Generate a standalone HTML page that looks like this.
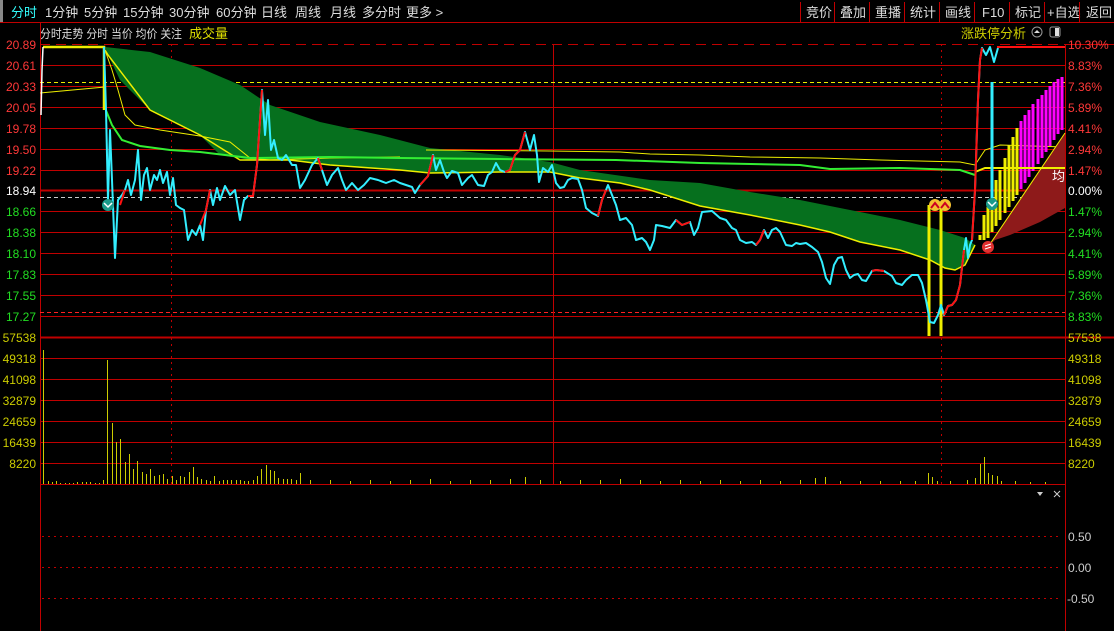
<!DOCTYPE html>
<html><head><meta charset="utf-8"><style>
body{margin:0;background:#000;width:1114px;height:631px;overflow:hidden;font-family:"Liberation Sans","Noto Sans CJK SC",sans-serif}
svg{display:block}
</style></head><body>
<svg width="1114" height="631" viewBox="0 0 1114 631" xmlns="http://www.w3.org/2000/svg" font-family="Liberation Sans, Noto Sans CJK SC, sans-serif">
<rect width="1114" height="631" fill="#000"/>
<!-- top bar -->
<rect x="0" y="0" width="3" height="22" fill="#888"/>
<line x1="0" y1="22.5" x2="1114" y2="22.5" stroke="#c00000"/>
<g font-size="13" fill="#ddd">
<text x="11" y="17" fill="#3ff">分时</text>
<text x="45" y="17">1分钟</text><text x="84" y="17">5分钟</text><text x="123" y="17">15分钟</text><text x="169" y="17">30分钟</text><text x="216" y="17">60分钟</text>
<text x="261" y="17">日线</text><text x="295" y="17">周线</text><text x="330" y="17">月线</text><text x="362" y="17">多分时</text><text x="406" y="17">更多 &gt;</text>
<text x="806" y="17">竞价</text><text x="840" y="17">叠加</text><text x="875" y="17">重播</text><text x="910" y="17">统计</text><text x="945" y="17">画线</text><text x="982" y="17">F10</text><text x="1015" y="17">标记</text><text x="1047" y="17">+自选</text><text x="1086" y="17">返回</text>
</g>
<g stroke="#c00000"><line x1="800.5" y1="2" x2="800.5" y2="22"/><line x1="834.5" y1="2" x2="834.5" y2="22"/><line x1="869.5" y1="2" x2="869.5" y2="22"/><line x1="904.5" y1="2" x2="904.5" y2="22"/><line x1="939.5" y1="2" x2="939.5" y2="22"/><line x1="974.5" y1="2" x2="974.5" y2="22"/><line x1="1009.5" y1="2" x2="1009.5" y2="22"/><line x1="1044.5" y1="2" x2="1044.5" y2="22"/><line x1="1079.5" y1="2" x2="1079.5" y2="22"/></g>
<!-- label row -->
<text x="40" y="38" font-size="12" fill="#ddd" textLength="142" lengthAdjust="spacingAndGlyphs">分时走势 分时 当价 均价 关注</text>
<text x="189" y="38" font-size="13" fill="#dd0">成交量</text>
<text x="961" y="38" font-size="13" fill="#cc0">涨跌停分析</text>
<circle cx="1037" cy="32" r="5" fill="none" stroke="#999"/><path d="M1034 33 L1037 30 L1040 33Z" fill="#ddd"/>
<rect x="1050" y="27" width="10" height="10" rx="2" fill="none" stroke="#999"/><rect x="1055" y="28" width="4" height="8" fill="#ddd"/>
<!-- borders -->
<line x1="40.5" y1="23" x2="40.5" y2="631" stroke="#c00000"/>
<line x1="1065.5" y1="44" x2="1065.5" y2="631" stroke="#c00000"/>
<line x1="1065" y1="44.5" x2="1114" y2="44.5" stroke="#c00000"/>
<!-- price grid -->
<g stroke="#c00000" stroke-width="1">
<line x1="40" y1="44.5" x2="1065" y2="44.5" stroke-dasharray="10 6"/>
<line x1="40" y1="65.5" x2="1065" y2="65.5"/><line x1="40" y1="86.5" x2="1065" y2="86.5"/><line x1="40" y1="107.5" x2="1065" y2="107.5"/><line x1="40" y1="128.5" x2="1065" y2="128.5"/><line x1="40" y1="149.5" x2="1065" y2="149.5"/><line x1="40" y1="170.5" x2="1065" y2="170.5"/>
<line x1="40" y1="190.5" x2="1065" y2="190.5" stroke-width="2"/>
<line x1="40" y1="211.5" x2="1065" y2="211.5"/><line x1="40" y1="232.5" x2="1065" y2="232.5"/><line x1="40" y1="253.5" x2="1065" y2="253.5"/><line x1="40" y1="274.5" x2="1065" y2="274.5"/><line x1="40" y1="295.5" x2="1065" y2="295.5"/><line x1="40" y1="316.5" x2="1065" y2="316.5"/>
<line x1="40" y1="337.5" x2="1114" y2="337.5" stroke-width="2"/>
<line x1="40" y1="358.5" x2="1065" y2="358.5"/><line x1="40" y1="379.5" x2="1065" y2="379.5"/><line x1="40" y1="400.5" x2="1065" y2="400.5"/><line x1="40" y1="421.5" x2="1065" y2="421.5"/><line x1="40" y1="442.5" x2="1065" y2="442.5"/><line x1="40" y1="463.5" x2="1065" y2="463.5"/>
<line x1="40" y1="484.5" x2="1065" y2="484.5"/>
<line x1="40" y1="312.5" x2="1065" y2="312.5" stroke="#f22" stroke-dasharray="4 3"/>
<line x1="171.5" y1="44" x2="171.5" y2="484" stroke-dasharray="2 4"/>
<line x1="941.5" y1="44" x2="941.5" y2="484" stroke-dasharray="2 4"/>
<line x1="553.5" y1="44" x2="553.5" y2="484"/>
<line x1="42" y1="536.5" x2="1062" y2="536.5" stroke-dasharray="2 4"/><line x1="42" y1="567.5" x2="1062" y2="567.5" stroke-dasharray="2 4"/><line x1="42" y1="598.5" x2="1062" y2="598.5" stroke-dasharray="2 4"/>
</g>
<line x1="40" y1="82.5" x2="1065" y2="82.5" stroke="#ee0" stroke-dasharray="4 3"/>
<line x1="40" y1="197.5" x2="1065" y2="197.5" stroke="#ccc" stroke-dasharray="4 3"/>
<!-- green band -->
<polygon fill="#06701e" points="105,47 150,52 200,68 240,85 270,105 320,122 380,135 430,148 500,155 550,162 580,170 650,180 700,183 750,192 800,200 850,210 900,220 940,230 965,238 975,245 965,265 955,270 945,268 930,260 900,250 860,242 830,232 800,225 750,215 700,206 650,190 620,183 580,178 550,172 500,172 430,173 400,170 330,165 290,160 250,160 220,155 200,135 150,110 120,80 108,55"/>
<!-- thin yellow lines -->
<polyline fill="none" stroke="#ee0" stroke-width="1" points="40,93 105,87"/>
<polyline fill="none" stroke="#ee0" stroke-width="1" points="105,50 112,70 118,90 125,115 135,125 160,130 200,136 230,142 250,158 270,160 330,158 400,157"/>
<polyline fill="none" stroke="#ee0" stroke-width="1" points="426,150 550,151 620,152 650,154 700,155 750,157 820,158 880,160 960,162 975,165 985,150 1000,145 1065,147"/>
<polyline fill="none" stroke="#ee0" stroke-width="1.5" points="105,50 108,55 150,110 200,135 240,160 290,160 330,165 400,170 430,173 500,172 550,172 580,178 620,183 650,190 700,206 750,215 800,225 830,232 860,242 900,250 930,260 945,268 955,270 965,265 975,245"/>
<!-- green MA -->
<polyline fill="none" stroke="#3e3" stroke-width="2" points="105,108 112,125 122,140 140,146 170,150 200,152 250,158 330,157 400,158 500,159 616,160 700,163 800,165 830,169 900,168 960,170 975,175"/>
<polyline fill="none" stroke="#ee0" stroke-width="2" points="975,172 985,168 1065,168"/>
<!-- yellow top box -->
<polyline fill="none" stroke="#ee0" stroke-width="2.5" points="43,47 104,47 104,110"/>
<polyline fill="none" stroke="#fff" stroke-width="1.5" points="41,115 42,70 43,47"/>
<!-- right bars -->
<polygon fill="#8e1a1a" points="988,247 1065,133 1065,208 1040,222 1010,235 995,240"/>
<g stroke="#ee0" stroke-width="3">
<line x1="980" y1="240" x2="980" y2="235"/><line x1="984" y1="240" x2="984" y2="215"/><line x1="988" y1="238" x2="988" y2="207"/><line x1="992" y1="232" x2="992" y2="197"/><line x1="996" y1="226" x2="996" y2="180"/><line x1="1000" y1="220" x2="1000" y2="170"/><line x1="1005" y1="213" x2="1005" y2="158"/><line x1="1009" y1="207" x2="1009" y2="145"/><line x1="1013" y1="201" x2="1013" y2="137"/><line x1="1017" y1="195" x2="1017" y2="128"/></g>
<g stroke="#f0f" stroke-width="3">
<line x1="1021" y1="189" x2="1021" y2="121"/><line x1="1025" y1="183" x2="1025" y2="115"/><line x1="1029" y1="177" x2="1029" y2="110"/><line x1="1033" y1="171" x2="1033" y2="104"/><line x1="1038" y1="164" x2="1038" y2="99"/><line x1="1042" y1="158" x2="1042" y2="95"/><line x1="1046" y1="152" x2="1046" y2="90"/><line x1="1050" y1="146" x2="1050" y2="86"/><line x1="1054" y1="140" x2="1054" y2="82"/><line x1="1058" y1="134" x2="1058" y2="79"/><line x1="1062" y1="130" x2="1062" y2="77"/></g>
<line x1="988" y1="247" x2="1065" y2="133" stroke="#ee0" stroke-width="1"/>
<line x1="985" y1="168" x2="1065" y2="168" stroke="#ee0" stroke-width="2"/>
<text x="1052" y="181" font-size="13" fill="#fff">均</text>
<!-- buy/sell yellow bars -->
<line x1="929" y1="205" x2="929" y2="336" stroke="#ee0" stroke-width="3"/>
<line x1="941" y1="205" x2="941" y2="336" stroke="#ee0" stroke-width="3"/>
<line x1="992" y1="82" x2="992" y2="200" stroke="#3ef" stroke-width="3"/>
<!-- price line -->
<polyline fill="none" stroke="#3ef" stroke-width="2" stroke-linejoin="round" points="104,47 106,110 108,200 110,130 112,180 115,258 118,200 122,195 125,190 128,180 131,195 135,180 138,150 141,200 144,175 147,168 150,190 154,175 157,180 160,170 163,183 167,172 170,195 173,178 176,205 180,208 184,210 188,240 192,230 196,235 200,225 203,240 206,210 210,190 213,205 217,188 220,200 225,186 230,195 235,190 240,220 244,200 248,196 253,196 257,165 262,90 265,135 268,100 271,150 274,140 278,158 282,160 286,155 292,165 296,165 300,188 305,180 312,165 318,158 322,170 327,185 332,175 338,168 342,180 346,190 352,183 358,190 364,185 370,178 378,180 386,183 394,180 400,183 412,187 415,193 420,185 428,176 433,155 436,170 440,160 444,172 447,178 452,171 458,173 462,185 468,178 472,175 478,185 484,186 488,175 492,172 496,163 500,170 505,172 510,170 515,155 520,150 525,132 530,150 534,135 537,155 539,182 543,168 548,172 552,165 556,183 560,188 564,187 568,180 572,178 578,179 582,190 586,208 592,213 598,216 602,200 606,190 608,185 612,195 616,205 620,220 626,218 632,225 636,240 642,238 646,242 650,250 654,240 656,225 662,226 666,227 670,228 676,220 682,225 690,222 694,235 698,228 702,212 712,211 720,218 726,220 732,228 736,230 740,240 746,243 752,242 756,245 760,240 764,230 768,238 772,230 776,228 780,232 786,245 792,246 796,243 800,244 806,243 812,247 818,252 822,262 826,278 830,284 834,265 838,258 842,257 846,270 850,278 854,275 858,274 862,280 866,281 872,271 876,270 884,271 892,276 896,283 902,285 906,280 912,275 918,275 922,283 926,300 930,322 934,323 938,315 941,305 944,315 948,306 952,305 956,300 960,285 964,250 966,238 968,258 970,245 972,240 975,190 978,100 980,60 982,48 986,55 990,47 994,62 998,48"/>
<g fill="none" stroke="#f11" stroke-width="2">
<polyline points="120,205 125,190"/><polyline points="200,225 206,210 210,190"/><polyline points="248,196 253,196 257,165 262,90"/>
<polyline points="318,158 322,170"/><polyline points="420,185 428,176 433,155"/><polyline points="505,172 510,170 515,155 520,150 525,132"/>
<polyline points="598,216 602,200 606,190"/><polyline points="676,220 682,225 690,222"/><polyline points="756,245 760,240 764,230"/>
<polyline points="872,271 876,270 884,271"/><polyline points="944,315 948,306 952,305 956,300 960,285 964,250"/>
<polyline points="972,240 975,190 978,100 980,60 982,48"/>
<polyline points="997,47 1065,47"/></g>
<!-- icons -->
<g><circle cx="108" cy="205" r="6" fill="#1a9a8a"/><path d="M104 203 L108 207 L112 203" stroke="#fff" stroke-width="1.5" fill="none"/></g>
<g><circle cx="992" cy="204" r="6" fill="#1a9a8a"/><path d="M988 202 L992 206 L996 202" stroke="#fff" stroke-width="1.5" fill="none"/></g>
<g><circle cx="935" cy="205" r="6" fill="#f4c030"/><path d="M931 208 L935 203 L939 208" stroke="#c02" stroke-width="2" fill="none"/></g>
<g><circle cx="945" cy="205" r="6" fill="#f4c030"/><path d="M941 208 L945 203 L949 208" stroke="#c02" stroke-width="2" fill="none"/></g>
<circle cx="988" cy="247" r="6" fill="#e03030"/><path d="M985 246 L991 244 M985 249 L991 247" stroke="#fff" stroke-width="1"/>
<!-- volume bars -->
<g stroke="#cc0" stroke-width="1">
<line x1="43.5" y1="484" x2="43.5" y2="350"/><line x1="48.5" y1="484" x2="48.5" y2="481"/><line x1="52.5" y1="484" x2="52.5" y2="482"/><line x1="56.5" y1="484" x2="56.5" y2="481"/><line x1="60.5" y1="484" x2="60.5" y2="483"/><line x1="65.5" y1="484" x2="65.5" y2="483"/><line x1="69.5" y1="484" x2="69.5" y2="483"/><line x1="73.5" y1="484" x2="73.5" y2="483"/><line x1="77.5" y1="484" x2="77.5" y2="482"/><line x1="82.5" y1="484" x2="82.5" y2="482"/><line x1="86.5" y1="484" x2="86.5" y2="482"/><line x1="90.5" y1="484" x2="90.5" y2="482"/><line x1="95.5" y1="484" x2="95.5" y2="483"/><line x1="99.5" y1="484" x2="99.5" y2="483"/><line x1="103.5" y1="484" x2="103.5" y2="480"/>
<line x1="107.5" y1="484" x2="107.5" y2="360"/><line x1="112.5" y1="484" x2="112.5" y2="423"/><line x1="116.5" y1="484" x2="116.5" y2="442"/><line x1="120.5" y1="484" x2="120.5" y2="439"/><line x1="125.5" y1="484" x2="125.5" y2="462"/><line x1="129.5" y1="484" x2="129.5" y2="454"/><line x1="133.5" y1="484" x2="133.5" y2="469"/><line x1="137.5" y1="484" x2="137.5" y2="461"/><line x1="142.5" y1="484" x2="142.5" y2="472"/><line x1="146.5" y1="484" x2="146.5" y2="474"/><line x1="150.5" y1="484" x2="150.5" y2="469"/><line x1="154.5" y1="484" x2="154.5" y2="476"/><line x1="159.5" y1="484" x2="159.5" y2="475"/><line x1="163.5" y1="484" x2="163.5" y2="474"/><line x1="167.5" y1="484" x2="167.5" y2="479"/><line x1="172.5" y1="484" x2="172.5" y2="476"/><line x1="176.5" y1="484" x2="176.5" y2="480"/><line x1="180.5" y1="484" x2="180.5" y2="476"/><line x1="184.5" y1="484" x2="184.5" y2="477"/><line x1="189.5" y1="484" x2="189.5" y2="472"/><line x1="193.5" y1="484" x2="193.5" y2="467"/><line x1="197.5" y1="484" x2="197.5" y2="477"/><line x1="201.5" y1="484" x2="201.5" y2="479"/><line x1="206.5" y1="484" x2="206.5" y2="480"/><line x1="210.5" y1="484" x2="210.5" y2="481"/><line x1="214.5" y1="484" x2="214.5" y2="476"/><line x1="219.5" y1="484" x2="219.5" y2="481"/><line x1="223.5" y1="484" x2="223.5" y2="480"/><line x1="227.5" y1="484" x2="227.5" y2="480"/><line x1="231.5" y1="484" x2="231.5" y2="480"/><line x1="236.5" y1="484" x2="236.5" y2="480"/><line x1="240.5" y1="484" x2="240.5" y2="480"/><line x1="244.5" y1="484" x2="244.5" y2="481"/><line x1="248.5" y1="484" x2="248.5" y2="481"/><line x1="253.5" y1="484" x2="253.5" y2="480"/><line x1="257.5" y1="484" x2="257.5" y2="476"/><line x1="261.5" y1="484" x2="261.5" y2="469"/><line x1="266.5" y1="484" x2="266.5" y2="465"/><line x1="270.5" y1="484" x2="270.5" y2="470"/><line x1="274.5" y1="484" x2="274.5" y2="471"/><line x1="278.5" y1="484" x2="278.5" y2="478"/><line x1="283.5" y1="484" x2="283.5" y2="479"/><line x1="287.5" y1="484" x2="287.5" y2="479"/><line x1="291.5" y1="484" x2="291.5" y2="479"/><line x1="296.5" y1="484" x2="296.5" y2="480"/><line x1="300.5" y1="484" x2="300.5" y2="473"/>
</g>
<g stroke="#cc0" stroke-width="1">
<line x1="310.5" y1="484" x2="310.5" y2="480"/><line x1="330.5" y1="484" x2="330.5" y2="480"/><line x1="350.5" y1="484" x2="350.5" y2="481"/><line x1="370.5" y1="484" x2="370.5" y2="480"/><line x1="390.5" y1="484" x2="390.5" y2="481"/><line x1="410.5" y1="484" x2="410.5" y2="480"/><line x1="430.5" y1="484" x2="430.5" y2="479"/><line x1="450.5" y1="484" x2="450.5" y2="481"/><line x1="470.5" y1="484" x2="470.5" y2="480"/><line x1="490.5" y1="484" x2="490.5" y2="480"/><line x1="510.5" y1="484" x2="510.5" y2="479"/><line x1="525.5" y1="484" x2="525.5" y2="477"/><line x1="540.5" y1="484" x2="540.5" y2="480"/><line x1="560.5" y1="484" x2="560.5" y2="481"/><line x1="580.5" y1="484" x2="580.5" y2="480"/><line x1="600.5" y1="484" x2="600.5" y2="480"/><line x1="620.5" y1="484" x2="620.5" y2="479"/><line x1="640.5" y1="484" x2="640.5" y2="480"/><line x1="660.5" y1="484" x2="660.5" y2="481"/><line x1="680.5" y1="484" x2="680.5" y2="480"/><line x1="700.5" y1="484" x2="700.5" y2="481"/><line x1="720.5" y1="484" x2="720.5" y2="480"/><line x1="740.5" y1="484" x2="740.5" y2="481"/><line x1="760.5" y1="484" x2="760.5" y2="480"/><line x1="780.5" y1="484" x2="780.5" y2="481"/><line x1="800.5" y1="484" x2="800.5" y2="480"/><line x1="815.5" y1="484" x2="815.5" y2="478"/><line x1="825.5" y1="484" x2="825.5" y2="477"/><line x1="840.5" y1="484" x2="840.5" y2="481"/><line x1="860.5" y1="484" x2="860.5" y2="481"/><line x1="880.5" y1="484" x2="880.5" y2="481"/><line x1="900.5" y1="484" x2="900.5" y2="481"/><line x1="915.5" y1="484" x2="915.5" y2="481"/><line x1="928.5" y1="484" x2="928.5" y2="473"/><line x1="932.5" y1="484" x2="932.5" y2="477"/><line x1="937.5" y1="484" x2="937.5" y2="481"/><line x1="950.5" y1="484" x2="950.5" y2="481"/><line x1="967.5" y1="484" x2="967.5" y2="480"/><line x1="975.5" y1="484" x2="975.5" y2="478"/><line x1="980.5" y1="484" x2="980.5" y2="464"/><line x1="984.5" y1="484" x2="984.5" y2="457"/><line x1="988.5" y1="484" x2="988.5" y2="473"/><line x1="992.5" y1="484" x2="992.5" y2="475"/><line x1="997.5" y1="484" x2="997.5" y2="476"/><line x1="1001.5" y1="484" x2="1001.5" y2="481"/><line x1="1015.5" y1="484" x2="1015.5" y2="481"/><line x1="1030.5" y1="484" x2="1030.5" y2="482"/><line x1="1045.5" y1="484" x2="1045.5" y2="482"/></g>
<!-- lower panel markers -->
<path d="M1037 492 L1043 492 L1040 496Z" fill="#ccc"/>
<path d="M1054 491 L1060 497 M1060 491 L1054 497" stroke="#ccc" stroke-width="1"/>
<!-- left axis -->
<g font-size="12" text-anchor="end">
<g fill="#ff3838"><text x="36" y="49">20.89</text><text x="36" y="70">20.61</text><text x="36" y="91">20.33</text><text x="36" y="112">20.05</text><text x="36" y="133">19.78</text><text x="36" y="154">19.50</text><text x="36" y="175">19.22</text></g>
<text x="36" y="195" fill="#fff">18.94</text>
<g fill="#22dd22"><text x="36" y="216">18.66</text><text x="36" y="237">18.38</text><text x="36" y="258">18.10</text><text x="36" y="279">17.83</text><text x="36" y="300">17.55</text><text x="36" y="321">17.27</text></g>
<g fill="#cccc00"><text x="36" y="342">57538</text><text x="36" y="363">49318</text><text x="36" y="384">41098</text><text x="36" y="405">32879</text><text x="36" y="426">24659</text><text x="36" y="447">16439</text><text x="36" y="468">8220</text></g>
</g>
<!-- right axis -->
<g font-size="12">
<g fill="#ff3838"><text x="1068" y="49">10.30%</text><text x="1068" y="70">8.83%</text><text x="1068" y="91">7.36%</text><text x="1068" y="112">5.89%</text><text x="1068" y="133">4.41%</text><text x="1068" y="154">2.94%</text><text x="1068" y="175">1.47%</text></g>
<text x="1068" y="195" fill="#fff">0.00%</text>
<g fill="#22dd22"><text x="1068" y="216">1.47%</text><text x="1068" y="237">2.94%</text><text x="1068" y="258">4.41%</text><text x="1068" y="279">5.89%</text><text x="1068" y="300">7.36%</text><text x="1068" y="321">8.83%</text></g>
<g fill="#cccc00"><text x="1068" y="342">57538</text><text x="1068" y="363">49318</text><text x="1068" y="384">41098</text><text x="1068" y="405">32879</text><text x="1068" y="426">24659</text><text x="1068" y="447">16439</text><text x="1068" y="468">8220</text></g>
<g fill="#ccc"><text x="1068" y="541">0.50</text><text x="1068" y="572">0.00</text><text x="1067" y="603">-0.50</text></g>
</g>
</svg>
</body></html>
